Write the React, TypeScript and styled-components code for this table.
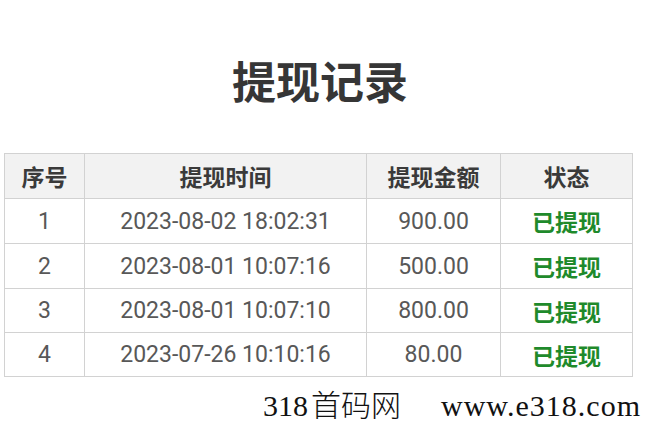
import React from "react";
import styled, { createGlobalStyle } from "styled-components";

const Global = createGlobalStyle`
  html, body { margin: 0; padding: 0; background: #ffffff; }
  body { width: 648px; height: 424px; overflow: hidden; }
`;

const Page = styled.div`
  width: 648px;
  height: 424px;
  display: flex;
  flex-direction: column;
  background: #fff;
`;

const Title = styled.h1`
  margin: 55px 0 0 0;
  padding-right: 8px;
  height: 50px;
  line-height: 50px;
  text-align: center;
  font-family: "Noto Sans CJK SC", sans-serif;
  font-weight: 700;
  font-size: 44px;
  color: #363636;
`;

const Table = styled.table`
  margin: 48px 0 0 4px;
  width: 629px;
  border-collapse: collapse;
  table-layout: fixed;
`;

const HeadCell = styled.th<{ $w?: number }>`
  ${(p) => (p.$w ? `width: ${p.$w}px;` : "")}
  height: 44px;
  padding: 0;
  background: #f2f2f2;
  border: 1px solid #d2d2d2;
  font-family: "Noto Sans CJK SC", sans-serif;
  font-weight: 700;
  font-size: 23px;
  color: #3a3a3a;
  text-align: center;
`;

const Row = styled.tr<{ $h: number }>`
  height: ${(p) => p.$h}px;
`;

const Cell = styled.td`
  padding: 0;
  border: 1px solid #d2d2d2;
  font-family: Roboto, "Noto Sans CJK SC", sans-serif;
  font-size: 23px;
  color: #585858;
  text-align: center;
`;

const Status = styled.span`
  font-family: "Noto Sans CJK SC", sans-serif;
  font-weight: 700;
  font-size: 23px;
  color: #1f8a2b;
`;

const Watermark = styled.div`
  margin: 10px 0 0 263px;
  display: flex;
  align-items: baseline;
  gap: 40px;
  font-family: "Liberation Serif", "Noto Sans CJK SC", serif;
  font-size: 30px;
  line-height: 32px;
  color: #111;
  white-space: nowrap;
`;

const Brand = styled.span`
  display: flex;
  align-items: baseline;
  gap: 3px;
`;

const BrandCjk = styled.span`
  font-family: "Noto Sans CJK SC", sans-serif;
  font-weight: 300;
  font-size: 30px;
`;

const Site = styled.span`
  letter-spacing: 1px;
`;

const rows = [
  { n: "1", t: "2023-08-02 18:02:31", a: "900.00", h: 45 },
  { n: "2", t: "2023-08-01 10:07:16", a: "500.00", h: 45 },
  { n: "3", t: "2023-08-01 10:07:10", a: "800.00", h: 44 },
  { n: "4", t: "2023-07-26 10:10:16", a: "80.00", h: 44 },
];

export default function App() {
  return (
    <Page>
      <Global />
      <Title>提现记录</Title>
      <Table>
        <thead>
          <Row $h={45}>
            <HeadCell $w={79}>序号</HeadCell>
            <HeadCell $w={281}>提现时间</HeadCell>
            <HeadCell $w={133}>提现金额</HeadCell>
            <HeadCell>状态</HeadCell>
          </Row>
        </thead>
        <tbody>
          {rows.map((r) => (
            <Row key={r.n} $h={r.h}>
              <Cell>{r.n}</Cell>
              <Cell>{r.t}</Cell>
              <Cell>{r.a}</Cell>
              <Cell>
                <Status>已提现</Status>
              </Cell>
            </Row>
          ))}
        </tbody>
      </Table>
      <Watermark>
        <Brand>
          318<BrandCjk>首码网</BrandCjk>
        </Brand>
        <Site>www.e318.com</Site>
      </Watermark>
    </Page>
  );
}
